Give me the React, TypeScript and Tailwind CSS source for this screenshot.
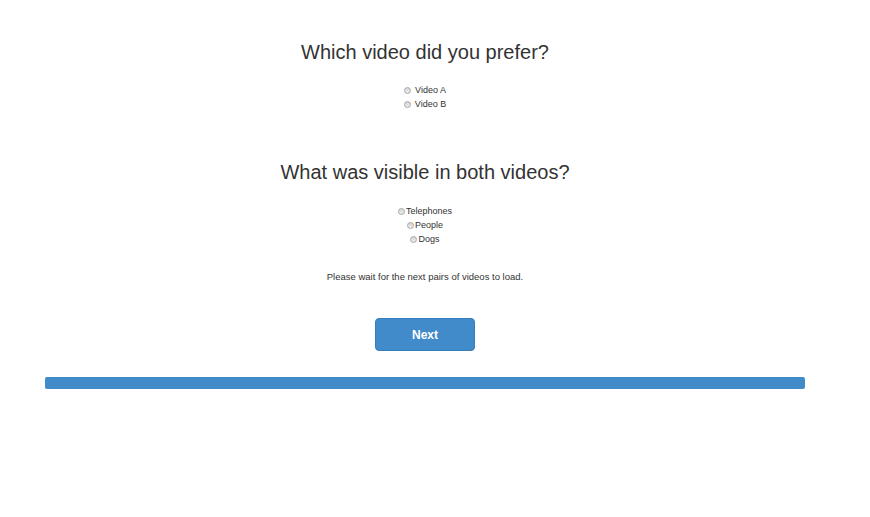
const font = "font-['Liberation_Sans',Arial,sans-serif]";

function Radio() {
  return (
    <span className="inline-block h-[7px] w-[7px] shrink-0 rounded-full border border-[#a8a8a8] bg-gradient-to-b from-[#d4d4d4] to-[#eeeeee]" />
  );
}

function Option({ label, gap }: { label: string; gap: boolean }) {
  return (
    <div className={`flex h-[14px] items-center justify-center ${gap ? "gap-[4px]" : "gap-[1px]"}`}>
      <Radio />
      <span>{label}</span>
    </div>
  );
}

export default function App() {
  return (
    <div className={`min-h-[517px] bg-white text-[#333] ${font}`}>
      <div className="ml-[45px] flex w-[760px] flex-col items-center pt-[40px]">
        <h2 className="text-[20px] leading-[24px]">Which video did you prefer?</h2>
        <div className="mt-[19px] text-[9px] leading-[14px]">
          <Option label="Video A" gap />
          <Option label="Video B" gap />
        </div>

        <h2 className="mt-[49px] text-[20px] leading-[24px]">What was visible in both videos?</h2>
        <div className="mt-[20px] text-[9px] leading-[14px]">
          <Option label="Telephones" gap={false} />
          <Option label="People" gap={false} />
          <Option label="Dogs" gap={false} />
        </div>

        <p className="mt-[24px] text-[9.5px] leading-[14px]">Please wait for the next pairs of videos to load.</p>

        <button
          type="button"
          className="mt-[34px] h-[33px] w-[100px] rounded-[4px] border border-[#357ebd] bg-[#428bca] text-[12px] font-bold text-white"
        >
          Next
        </button>

        <div className="mt-[26px] h-[12px] w-full rounded-[2px] bg-[#428bca]" />
      </div>
    </div>
  );
}
